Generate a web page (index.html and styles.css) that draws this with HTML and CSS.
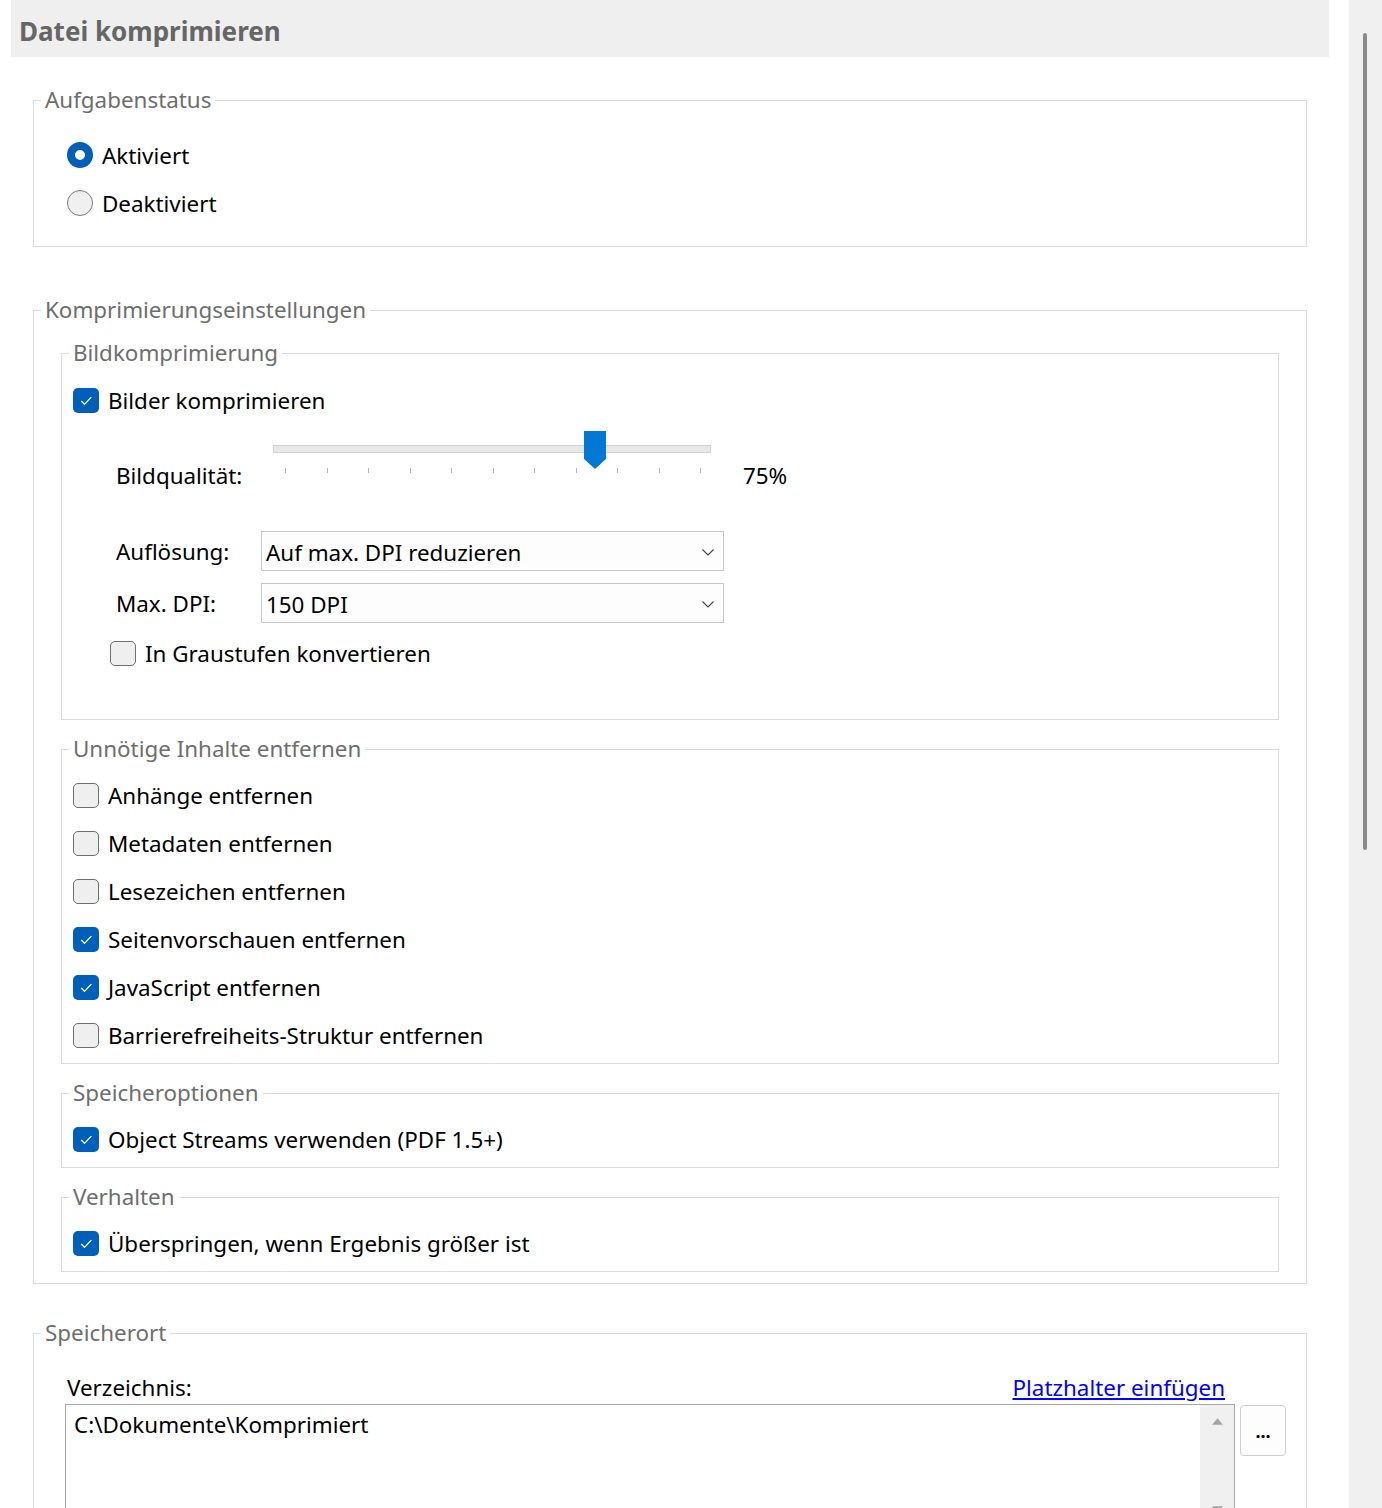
FILE: index.html
```html
<!DOCTYPE html>
<html lang="de">
<head>
  <meta charset="UTF-8">
  <title>Datei komprimieren</title>
  <link rel="stylesheet" href="styles.css">
</head>
<body>
  <div class="window">
    <div class="content">
      <div class="header"><h1>Datei komprimieren</h1></div>

      <!-- Aufgabenstatus -->
      <fieldset class="group status">
        <legend>Aufgabenstatus</legend>
        <div class="row"><span class="radio on"></span>Aktiviert</div>
        <div class="row"><span class="radio"></span>Deaktiviert</div>
      </fieldset>

      <!-- Komprimierung -->
      <fieldset class="group settings">
        <legend>Komprimierungseinstellungen</legend>

        <fieldset class="sub image">
          <legend>Bildkomprimierung</legend>
          <div class="row"><span class="check on"><svg viewBox="0 0 26 26"><path d="M8 13.5l3.5 3.5 7-7.5"/></svg></span>Bilder komprimieren</div>
          <div class="image-opts">
            <div class="slider-row">
              <span class="field-label">Bildqualität:</span>
              <div class="slider">
                <div class="track"></div>
                <svg class="thumb" viewBox="0 0 22 38"><polygon points="0,0 22,0 22,28 11,38 0,28"/></svg>
                <div class="ticks">
                  <i></i><i></i><i></i><i></i><i></i><i></i><i></i><i></i><i></i><i></i><i></i>
                </div>
              </div>
              <span class="value">75%</span>
            </div>
            <div class="select-row">
              <span class="field-label">Auflösung:</span>
              <div class="select">Auf max. DPI reduzieren<svg viewBox="0 0 12 7"><path d="M0.5 0.5L6 6l5.5-5.5"/></svg></div>
            </div>
            <div class="select-row">
              <span class="field-label">Max. DPI:</span>
              <div class="select">150 DPI<svg viewBox="0 0 12 7"><path d="M0.5 0.5L6 6l5.5-5.5"/></svg></div>
            </div>
            <div class="row gray"><span class="check"></span>In Graustufen konvertieren</div>
          </div>
        </fieldset>

        <fieldset class="sub">
          <legend>Unnötige Inhalte entfernen</legend>
          <div class="row"><span class="check"></span>Anhänge entfernen</div>
          <div class="row"><span class="check"></span>Metadaten entfernen</div>
          <div class="row"><span class="check"></span>Lesezeichen entfernen</div>
          <div class="row"><span class="check on"><svg viewBox="0 0 26 26"><path d="M8 13.5l3.5 3.5 7-7.5"/></svg></span>Seitenvorschauen entfernen</div>
          <div class="row"><span class="check on"><svg viewBox="0 0 26 26"><path d="M8 13.5l3.5 3.5 7-7.5"/></svg></span>JavaScript entfernen</div>
          <div class="row"><span class="check"></span>Barrierefreiheits-Struktur entfernen</div>
        </fieldset>

        <fieldset class="sub">
          <legend>Speicheroptionen</legend>
          <div class="row"><span class="check on"><svg viewBox="0 0 26 26"><path d="M8 13.5l3.5 3.5 7-7.5"/></svg></span>Object Streams verwenden (PDF 1.5+)</div>
        </fieldset>

        <fieldset class="sub">
          <legend>Verhalten</legend>
          <div class="row"><span class="check on"><svg viewBox="0 0 26 26"><path d="M8 13.5l3.5 3.5 7-7.5"/></svg></span>Überspringen, wenn Ergebnis größer ist</div>
        </fieldset>
      </fieldset>

      <!-- Speicherort -->
      <fieldset class="group location">
        <legend>Speicherort</legend>
        <div class="dir-head">
          <span>Verzeichnis:</span>
          <a href="#">Platzhalter einfügen</a>
        </div>
        <div class="dir-row">
          <div class="textbox">
            <div class="text">C:\Dokumente\Komprimiert</div>
            <div class="vscroll">
              <svg viewBox="0 0 10 6"><polygon points="5,0 10,6 0,6"/></svg>
              <svg viewBox="0 0 10 6"><polygon points="0,0 10,0 5,6"/></svg>
            </div>
          </div>
          <button class="browse">...</button>
        </div>
      </fieldset>
    </div>

    <div class="scrollbar"><div class="bar"></div></div>
  </div>
</body>
</html>
```

FILE: styles.css
```css
/* Reset */
* { box-sizing: border-box; }

body {
  margin: 0;
  background: #fff;
  font-family: "Noto Sans", "Open Sans", sans-serif;
  font-size: 22.4px;
  color: #000;
}

.window {
  display: flex;
  height: 1508px;
  overflow: hidden;
}

.content {
  width: 1349px;
  flex: none;
}

/* Title bar */
.header {
  margin: 0 20px 0 11px;
  height: 57px;
  background: #efefef;
}
.header h1 {
  margin: 0;
  padding-left: 8px;
  font-size: 26px;
  line-height: 62px;
  font-weight: bold;
  color: #666;
}

/* Group boxes */
fieldset {
  margin: 0;
  border: 1px solid #dcdcdc;
  min-width: 0;
}
legend {
  padding: 0 4px;
  line-height: 28px;
  color: #6e6e6e;
}

.group {
  margin: 0 42px 0 33px;
}
.status {
  margin-top: 29px;
  padding: 17px 20px 19px 33px;
}
.status > legend { margin-left: -26px; }
.settings {
  margin-top: 49px;
  padding: 15px 27px 11px 27px;
}
.settings > legend { margin-left: -20px; }
.location {
  margin-top: 35px;
  padding: 26px 20px 40px 31px;
}
.location > legend { margin-left: -24px; }

.sub {
  margin-top: 15px;
  padding: 8px 11px 4px 11px;
}
.sub > legend { margin-left: -4px; }
.sub.image {
  margin-top: 0;
  padding: 9px 11px 42px 11px;
}

/* Option rows */
.row {
  display: flex;
  align-items: center;
  gap: 9px;
  height: 48px;
}

.radio {
  width: 26px;
  height: 26px;
  border-radius: 50%;
  border: 1px solid #7a7a7a;
  background: #f0f0f0;
}
.radio.on {
  border: 8px solid #005fb8;
  background: #fff;
}

.check {
  display: flex;
  width: 26px;
  height: 25px;
  border-radius: 5px;
  border: 1.3px solid #6e6e6e;
  background: #efefef;
}
.check.on {
  border: none;
  background: #005fb8;
}
.check svg {
  width: 26px;
  height: 25px;
  fill: none;
  stroke: #fff;
  stroke-width: 1.4;
}

/* Image options */
.image-opts {
  margin-left: 43px;
}
.field-label {
  width: 145px;
  flex: none;
}

.slider-row {
  display: flex;
  align-items: flex-start;
}
.slider-row .field-label,
.slider-row .value {
  padding-top: 37px;
  line-height: 30px;
}
.slider-row .value {
  margin-left: 19px;
}
.slider {
  position: relative;
  width: 463px;
  height: 44px;
  margin-top: 7px;
}
.track {
  position: absolute;
  left: 12px;
  right: 13px;
  top: 14px;
  height: 8px;
  background: #e6e8e9;
  border: 1px solid #d2d2d2;
}
.thumb {
  position: absolute;
  left: 323px;
  top: 0;
  width: 22px;
  height: 38px;
  fill: #0078d4;
}
.ticks {
  position: absolute;
  left: 24px;
  right: 23px;
  top: 37px;
  display: flex;
  justify-content: space-between;
}
.ticks i {
  width: 1px;
  height: 5px;
  background: #b4b4b4;
}

.select-row {
  display: flex;
  align-items: center;
  margin-top: 40px;
}
.select-row + .select-row {
  margin-top: 12px;
}
.select {
  display: flex;
  align-items: center;
  justify-content: space-between;
  width: 463px;
  height: 40px;
  padding: 2px 9px 0 4px;
  border: 1px solid #c9c9c9;
  background: #fdfdfd;
}
.select svg {
  width: 12px;
  height: 7px;
  fill: none;
  stroke: #444;
  stroke-width: 1.1;
}

.row.gray {
  margin-top: 6px;
  margin-left: -6px;
}

/* Location */
.dir-head {
  display: flex;
  justify-content: space-between;
  width: 1171px;
  padding: 0 11px 0 2px;
  line-height: 30px;
}
.dir-head a {
  color: #0000ff;
}
.dir-row {
  display: flex;
  align-items: flex-start;
  gap: 5px;
  margin-top: 1px;
}
.textbox {
  display: flex;
  width: 1171px;
  height: 112px;
  border: 1px solid #a8a8a8;
  background: #fff;
}
.textbox .text {
  flex: 1;
  padding: 5px 8px;
  line-height: 30px;
}
.vscroll {
  display: flex;
  flex-direction: column;
  justify-content: space-between;
  align-items: center;
  width: 34px;
  padding: 13px 0 2px;
  background: #f0f0f0;
}
.vscroll svg {
  width: 11px;
  height: 7px;
  fill: #a3a3a3;
}
.browse {
  width: 46px;
  height: 51px;
  margin-top: 1px;
  border: 1px solid #cfcfcf;
  border-radius: 4px;
  background: #fdfdfd;
  font-family: inherit;
  font-size: 18px;
  font-weight: bold;
  color: #000;
}

/* Fake window scrollbar */
.scrollbar {
  width: 33px;
  flex: none;
  background: #f0f0f0;
}
.scrollbar .bar {
  margin: 33px 0 0 14px;
  width: 4px;
  height: 817px;
  border-radius: 2px;
  background: #8a8a8a;
}
```
